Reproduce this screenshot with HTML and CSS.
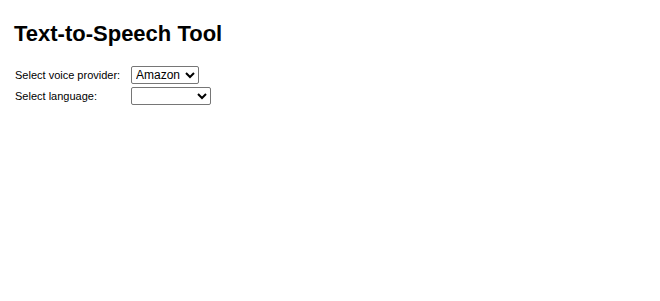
FILE: index.html
```html
<!DOCTYPE html>
<html lang="en">
<head>
    <meta charset="UTF-8">
    <meta name="viewport" content="width=device-width, initial-scale=1.0">
    <title>Text-to-Speech Tool</title>
    <link rel="stylesheet" href="styles.css">
</head>
<body>
    <h1>Text-to-Speech Tool</h1>
    <div class="form">
        <label for="provider">Select voice provider:</label>
        <select id="provider" class="provider">
            <option>Amazon</option>
            <option>Google</option>
        </select>
        <label for="language">Select language:</label>
        <select id="language" class="language">
            <option></option>
        </select>
    </div>
</body>
</html>
```

FILE: styles.css
```css
body {
    font-family: "Liberation Sans", Arial, sans-serif;
    font-size: 11px;
    background-color: #fff;
    color: #000;
    margin: 0;
    padding: 0 14px;
}
h1 {
    font-size: 22px;
    font-weight: bold;
    margin: 21px 0 19px 0;
}
.form {
    display: grid;
    grid-template-columns: 116px auto;
    row-gap: 3px;
    align-items: center;
    justify-items: start;
    padding-left: 1px;
}
select {
    font-family: "Liberation Sans", Arial, sans-serif;
    font-size: 12px;
    height: 18px;
    padding: 0;
    border: 1px solid #767676;
    border-radius: 2px;
    background-color: #fff;
    color: #000;
}
.provider {
    width: 68px;
}
.language {
    width: 80px;
}
```
